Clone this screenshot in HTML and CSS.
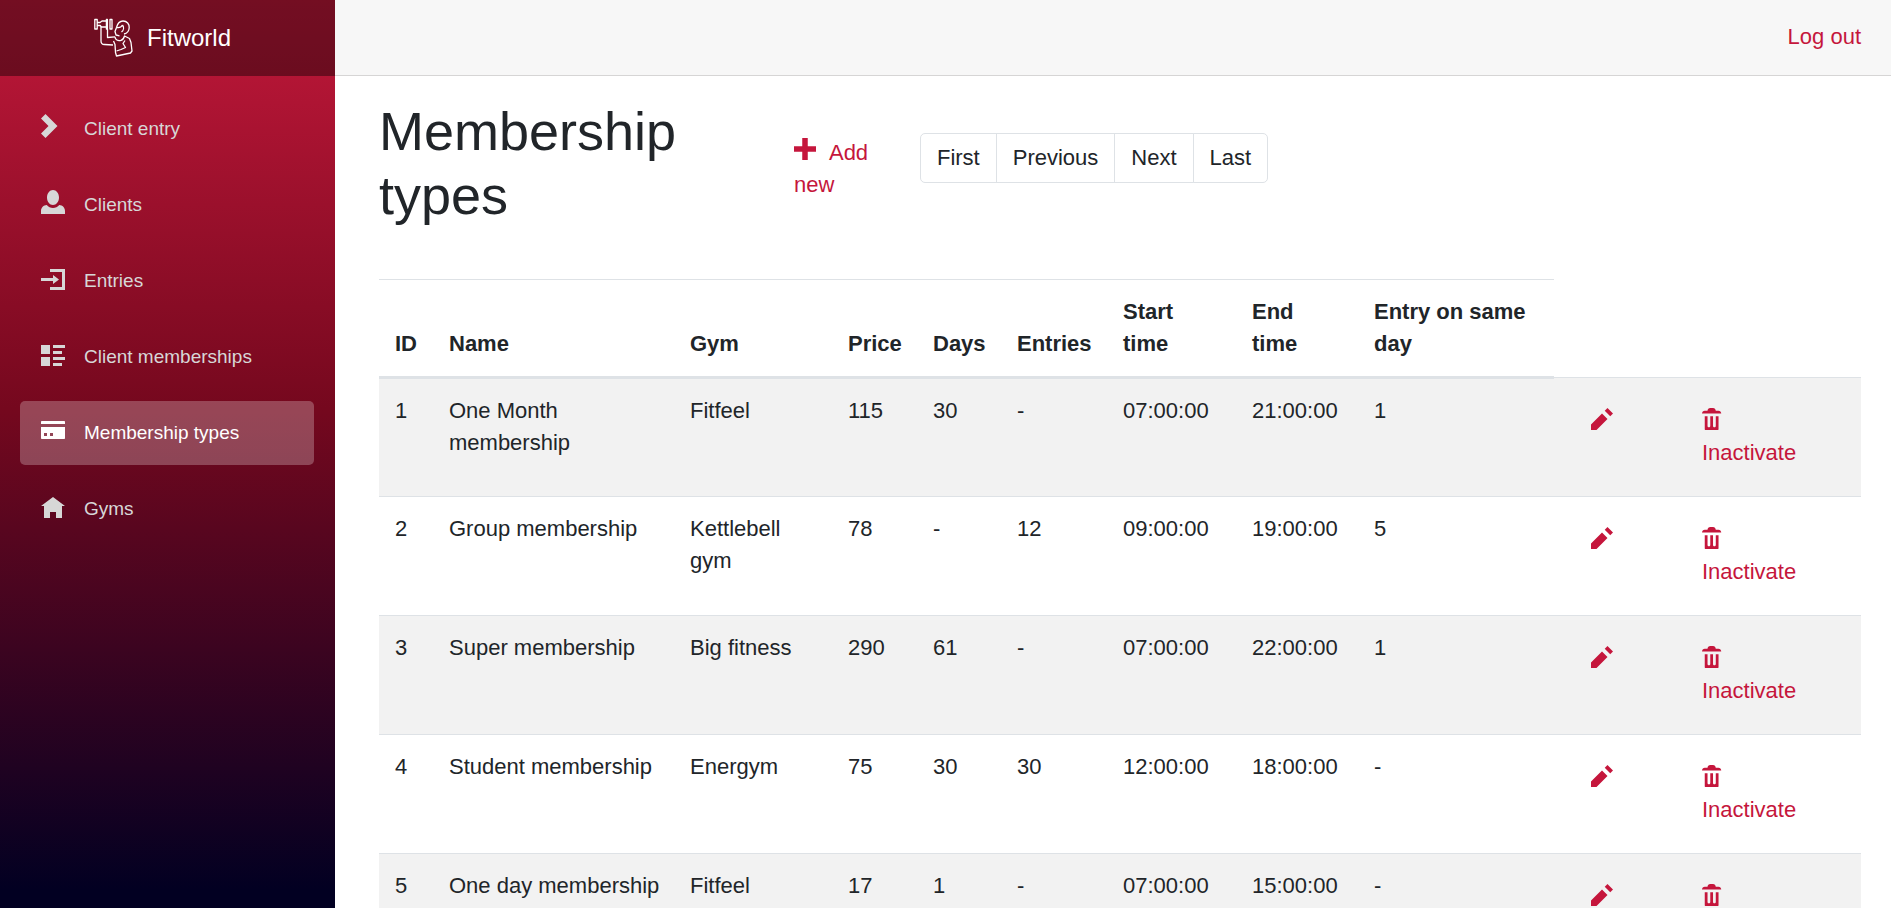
FILE: index.html
```html
<!DOCTYPE html>
<html lang="en">
<head>
<meta charset="utf-8">
<title>Fitworld</title>
<link rel="stylesheet" href="styles.css">
</head>
<body>
<svg class="sprite" aria-hidden="true">
  <symbol id="i-chevron" viewBox="0 0 8 8"><path d="M1.5 0l-1.5 1.5 2.5 2.5-2.5 2.5 1.5 1.5 4-4-4-4z"/></symbol>
  <symbol id="i-person" viewBox="0 0 8 8"><path d="M4 0c-1.1 0-2 1.12-2 2.5s.9 2.5 2 2.5 2-1.12 2-2.5-.9-2.5-2-2.5zm-2.09 5c-1.06.05-1.91.92-1.91 2v1h8v-1c0-1.08-.84-1.95-1.91-2-.54.61-1.28 1-2.09 1-.81 0-1.55-.39-2.09-1z"/></symbol>
  <symbol id="i-login" viewBox="0 -1 8 8"><path d="M3 0v1h4v5h-4v1h5v-7h-5zm1 2v1h-4v1h4v1l2-1.5-2-1.5z"/></symbol>
  <symbol id="i-list" viewBox="0 -1 8 8"><path d="M0 0v3h3v-3h-3zm4 0v1h4v-1h-4zm0 2v1h3v-1h-3zm-4 2v3h3v-3h-3zm4 0v1h4v-1h-4zm0 2v1h3v-1h-3z"/></symbol>
  <symbol id="i-card" viewBox="0 -1 8 8"><path d="M.25 0c-.14 0-.25.11-.25.25v.75h8v-.75c0-.14-.11-.25-.25-.25h-7.5zm-.25 2v3.75c0 .14.11.25.25.25h7.5c.14 0 .25-.11.25-.25v-3.750h-8zm1 2h1v1h-1v-1zm2 0h1v1h-1v-1z"/></symbol>
  <symbol id="i-home" viewBox="0 -1 8 8"><path d="M4 0l-4 3h1v4h2v-2h2v2h2v-4.03l1 .03-4-3z"/></symbol>
  <symbol id="i-plus" viewBox="0 0 8 8"><path d="M3 0v3h-3v2h3v3h2v-3h3v-2h-3v-3h-2z"/></symbol>
  <symbol id="i-pencil" viewBox="0 0 8 8"><path d="M6 0l-1 1 2 2 1-1-2-2zm-2 2l-4 4v2h2l4-4-2-2z"/></symbol>
  <symbol id="i-trash" viewBox="0 0 8 8"><path d="M3 0c-.55 0-1 .45-1 1h-1c-.55 0-1 .45-1 1h7c0-.55-.45-1-1-1h-1c0-.55-.45-1-1-1h-1zm-2 3v4.81c0 .11.08.19.19.19h4.63c.11 0 .19-.08.19-.19v-4.81h-1v3.5c0 .28-.22.5-.5.5s-.5-.22-.5-.5v-3.5h-1v3.5c0 .28-.22.5-.5.5s-.5-.22-.5-.5v-3.5h-1z"/></symbol>
</svg>
<div class="page">
  <aside class="sidebar">
    <a class="brand" href="#">
      <svg class="logo" viewBox="0 0 40 40" aria-hidden="true">
        <path d="M.8 1.5h2.4v9.500H.8zM12.400 1.500h1v9.500h-1zM16 1.500h2v9.500h-2zM3.200 4.500h2.800l2-1.500h4.400M3.200 7.500h3l1.200 1.500h5"/>
        <path d="M7 8.500v14.500q0 3.500 3.500 3.500l8.500.5M13.500 11v8.500l7.500-.7"/>
        <path d="M22.500 9.500c1-4 3.500-6.500 6.500-6.500 4 0 6.500 3 6.200 6.800-.2 3.200-2.200 5.700-5.200 6.200M22.500 9.500l-1.500 4 1 3.500 3.500.8M22.500 9.500c3 .5 5-.5 6-2.500M28.500 7c1.500 2 1.500 5-1 7"/>
        <path d="M21 18.800c0 3 3 4.500 6 3.500 2-.6 3-2.500 3.500-4.300l5 2.500 1.500 4 1 8.500-1.500 2-14 3-1-3.500-.5-8-1.500-3.500M31 22.500l-2 3 2.500 4-4.500 2-4.500 1.500"/>
      </svg>
      <span>Fitworld</span>
    </a>
    <nav>
      <ul class="menu">
        <li><a class="menu-link" href="#"><svg class="icon"><use href="#i-chevron"/></svg>Client entry</a></li>
        <li><a class="menu-link" href="#"><svg class="icon"><use href="#i-person"/></svg>Clients</a></li>
        <li><a class="menu-link" href="#"><svg class="icon"><use href="#i-login"/></svg>Entries</a></li>
        <li><a class="menu-link" href="#"><svg class="icon"><use href="#i-list"/></svg>Client memberships</a></li>
        <li><a class="menu-link active" href="#" aria-current="page"><svg class="icon"><use href="#i-card"/></svg>Membership types</a></li>
        <li><a class="menu-link" href="#"><svg class="icon"><use href="#i-home"/></svg>Gyms</a></li>
      </ul>
    </nav>
  </aside>
  <div class="main">
    <header class="topbar"><a class="link" href="#">Log out</a></header>
    <main class="content">
      <div class="heading">
        <h1 class="title">Membership types</h1>
        <a class="link add" href="#"><svg class="icon-sm"><use href="#i-plus"/></svg>Add new</a>
        <div class="pager">
          <button type="button">First</button>
          <button type="button">Previous</button>
          <button type="button">Next</button>
          <button type="button">Last</button>
        </div>
      </div>
      <table class="types">
        <colgroup>
          <col class="c-id"><col class="c-name"><col class="c-gym"><col class="c-price"><col class="c-days"><col class="c-entries"><col class="c-start"><col class="c-end"><col class="c-same"><col class="c-edit"><col class="c-off">
        </colgroup>
        <thead>
          <tr><th>ID</th><th>Name</th><th>Gym</th><th>Price</th><th>Days</th><th>Entries</th><th>Start time</th><th>End time</th><th>Entry on same day</th></tr>
        </thead>
        <tbody>
          <tr><td>1</td><td>One Month membership</td><td>Fitfeel</td><td>115</td><td>30</td><td>-</td><td>07:00:00</td><td>21:00:00</td><td>1</td>
            <td><a class="link action" href="#" aria-label="Edit"><svg class="icon-sm"><use href="#i-pencil"/></svg></a></td><td><a class="link action" href="#"><svg class="icon-sm"><use href="#i-trash"/></svg>Inactivate</a></td></tr>
          <tr><td>2</td><td>Group membership</td><td>Kettlebell gym</td><td>78</td><td>-</td><td>12</td><td>09:00:00</td><td>19:00:00</td><td>5</td>
            <td><a class="link action" href="#" aria-label="Edit"><svg class="icon-sm"><use href="#i-pencil"/></svg></a></td><td><a class="link action" href="#"><svg class="icon-sm"><use href="#i-trash"/></svg>Inactivate</a></td></tr>
          <tr><td>3</td><td>Super membership</td><td>Big fitness</td><td>290</td><td>61</td><td>-</td><td>07:00:00</td><td>22:00:00</td><td>1</td>
            <td><a class="link action" href="#" aria-label="Edit"><svg class="icon-sm"><use href="#i-pencil"/></svg></a></td><td><a class="link action" href="#"><svg class="icon-sm"><use href="#i-trash"/></svg>Inactivate</a></td></tr>
          <tr><td>4</td><td>Student membership</td><td>Energym</td><td>75</td><td>30</td><td>30</td><td>12:00:00</td><td>18:00:00</td><td>-</td>
            <td><a class="link action" href="#" aria-label="Edit"><svg class="icon-sm"><use href="#i-pencil"/></svg></a></td><td><a class="link action" href="#"><svg class="icon-sm"><use href="#i-trash"/></svg>Inactivate</a></td></tr>
          <tr><td>5</td><td>One day membership</td><td>Fitfeel</td><td>17</td><td>1</td><td>-</td><td>07:00:00</td><td>15:00:00</td><td>-</td>
            <td><a class="link action" href="#" aria-label="Edit"><svg class="icon-sm"><use href="#i-pencil"/></svg></a></td><td><a class="link action" href="#"><svg class="icon-sm"><use href="#i-trash"/></svg>Inactivate</a></td></tr>
        </tbody>
      </table>
    </main>
  </div>
</div>
</body>
</html>
```

FILE: styles.css
```css
*, *::before, *::after { box-sizing: border-box; }
body {
  margin: 0;
  font: 22px/32px "Liberation Sans", Arial, sans-serif;
  color: #212529;
  background: #fff;
}
a { text-decoration: none; }
.sprite { display: none; }
.page { display: flex; height: 100vh; }

.sidebar {
  flex: 0 0 335px;
  background: linear-gradient(180deg, #c1183a 0%, #75081e 45%, #020022 98%);
}
.brand {
  display: flex;
  align-items: center;
  gap: 13px;
  height: 76px;
  padding-left: 94px;
  font-size: 24px;
  color: #fff;
  background: rgba(0, 0, 0, 0.4);
}
.logo {
  width: 40px;
  height: 40px;
  fill: none;
  stroke: #fff;
  stroke-width: 1.3;
  stroke-linejoin: round;
}
.menu {
  display: grid;
  gap: 12px;
  margin: 0;
  padding: 21px 21px 0 20px;
  list-style: none;
}
.menu-link {
  display: flex;
  align-items: center;
  gap: 19px;
  height: 64px;
  padding: 0 21px;
  border-radius: 5px;
  font-size: 19px;
  color: #d7d7d7;
}
.menu-link.active { color: #fff; background: rgba(255, 255, 255, 0.25); }
.icon { width: 24px; height: 24px; margin-bottom: 6px; fill: currentColor; }
.icon-sm { width: 22px; height: 22px; fill: currentColor; }

.main { flex: 1; min-width: 0; overflow-y: auto; scrollbar-width: none; }
.topbar {
  display: flex;
  align-items: center;
  justify-content: flex-end;
  height: 76px;
  padding: 0 30px 2px 0;
  border-bottom: 1px solid #d6d5d5;
  background: #f7f7f7;
}
.link { color: #c5163c; }
.content { padding: 23px 30px 0 44px; }
.heading { display: flex; align-items: flex-start; margin-bottom: 52px; }
.title {
  flex: 0 0 28%;
  margin: 0;
  padding-right: 80px;
  font-size: 54px;
  font-weight: 400;
  line-height: 64px;
}
.add { width: 127px; padding: 38px 30px 0 0; }
.add .icon-sm { margin-right: 13px; }
.pager { display: flex; margin-top: 34px; }
.pager button {
  height: 50px;
  margin-left: -1px;
  padding: 0 16px;
  border: 1px solid #dee2e6;
  font: inherit;
  color: inherit;
  background: #fff;
}
.pager button:first-child { border-radius: 5px 0 0 5px; }
.pager button:last-child { border-radius: 0 5px 5px 0; }

.types { width: 100%; table-layout: fixed; border-collapse: collapse; }
.types th, .types td { padding: 16px; border-top: 1px solid #dee2e6; text-align: left; vertical-align: top; }
.types td { padding-right: 8px; }
.types thead th { vertical-align: bottom; border-bottom: 3px solid #dee2e6; }
.types tbody tr { height: 119px; }
.types tbody tr:nth-child(odd) { background: #f2f2f2; }
.c-id { width: 54px; }
.c-name { width: 241px; }
.c-gym { width: 158px; }
.c-price { width: 85px; }
.c-days { width: 84px; }
.c-entries { width: 106px; }
.c-start { width: 129px; }
.c-end { width: 122px; }
.c-same { width: 196px; }
.c-edit { width: 111px; }
.c-off { width: 196px; }
.types .action { display: block; padding: 14px 21px 0; }
.action .icon-sm { display: block; margin-bottom: 7px; }
```
